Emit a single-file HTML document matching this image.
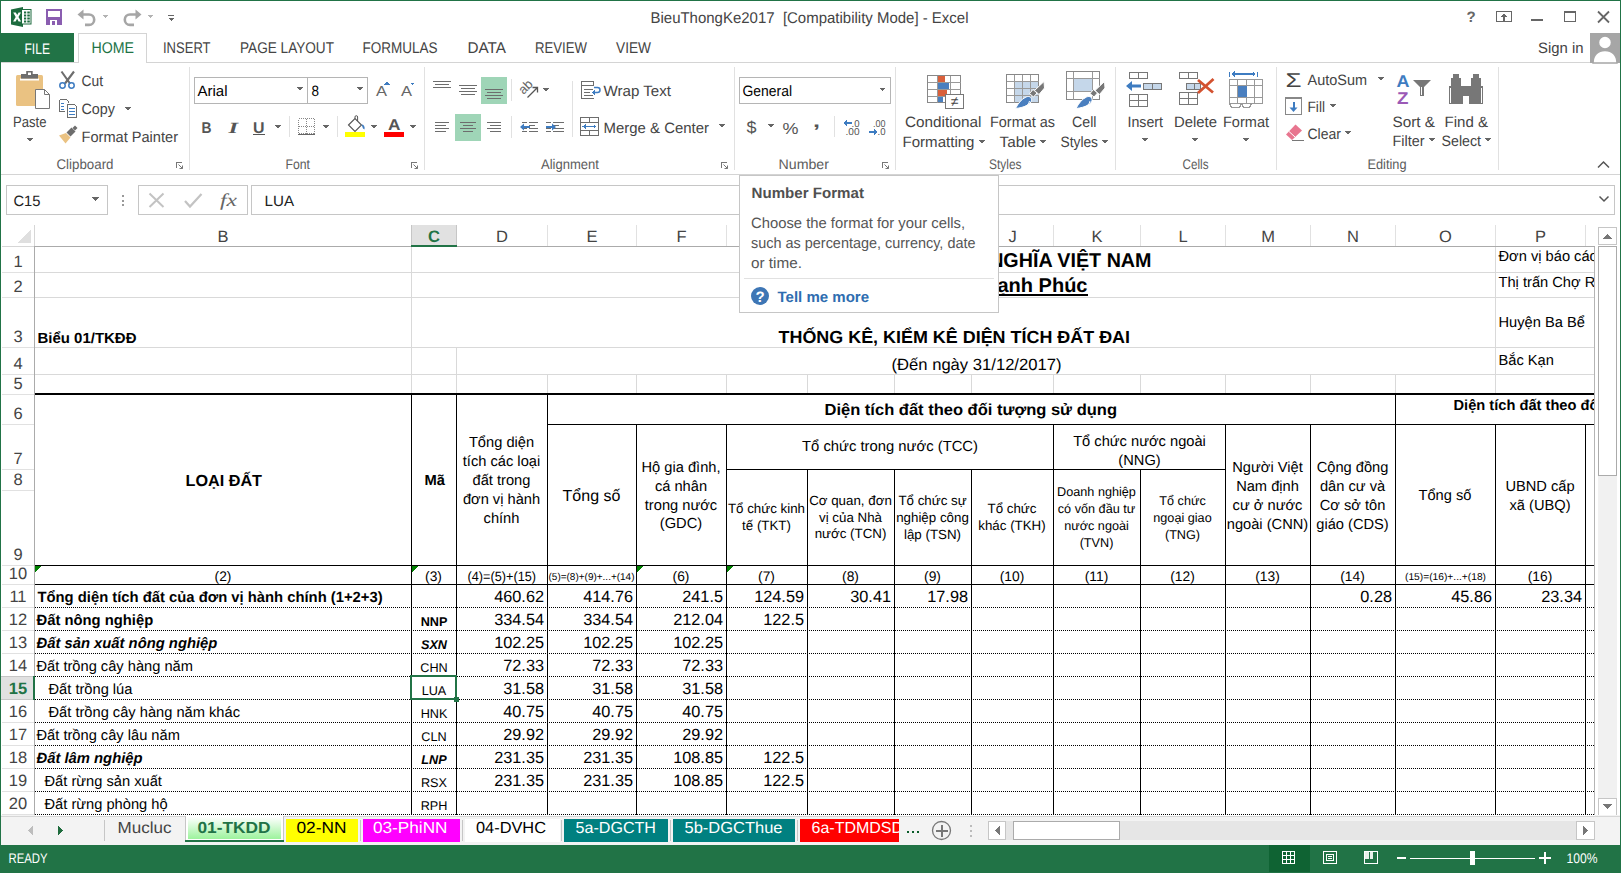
<!DOCTYPE html><html><head><meta charset="utf-8"><style>html,body{margin:0;padding:0;background:#fff;overflow:hidden}svg{display:block}</style></head><body>
<svg width="1621" height="873" viewBox="0 0 1621 873" shape-rendering="crispEdges" text-rendering="geometricPrecision">
<rect x="0" y="0" width="1621" height="873" fill="#fff" />
<g shape-rendering="geometricPrecision">
<path d="M11 9.5L23 7V27L11 24.5Z" fill="#1d6b3e"/>
<rect x="21.5" y="9.5" width="9.5" height="14.5" fill="#fff" stroke="#1d6b3e" stroke-width="1"/>
<rect x="24" y="11.5" width="2.2" height="2" fill="#1d6b3e"/><rect x="27.3" y="11.5" width="2.5" height="2" fill="#1d6b3e"/>
<rect x="24" y="14.5" width="2.2" height="2" fill="#1d6b3e"/><rect x="27.3" y="14.5" width="2.5" height="2" fill="#1d6b3e"/>
<rect x="24" y="17.5" width="2.2" height="2" fill="#1d6b3e"/><rect x="27.3" y="17.5" width="2.5" height="2" fill="#1d6b3e"/>
<rect x="24" y="20.5" width="2.2" height="2" fill="#1d6b3e"/><rect x="27.3" y="20.5" width="2.5" height="2" fill="#1d6b3e"/>
<path d="M13.2 12.5h2.6l1.4 2.6 1.4-2.6h2.4l-2.5 4.4 2.6 4.6h-2.5l-1.5-2.8-1.5 2.8h-2.5l2.6-4.6z" fill="#fff"/>
</g>
<rect x="46" y="9" width="16" height="16" fill="#8a5db0" />
<rect x="48" y="11" width="12" height="6" fill="#fff" />
<rect x="50" y="20" width="7" height="5" fill="#fff" />
<rect x="52" y="21" width="3" height="4" fill="#8a5db0" />
<g fill="none" stroke="#a6a6a6" stroke-width="2.6" shape-rendering="geometricPrecision">
<path d="M81 14.5h8a5.2 5.2 0 0 1 0 10.4h-4"/>
<path d="M138 14.5h-8a5.2 5.2 0 0 0 0 10.4h4"/>
</g>
<path d="M77.5 14.5l6-5v10z" fill="#a6a6a6" shape-rendering="geometricPrecision"/>
<path d="M141.5 14.5l-6-5v10z" fill="#a6a6a6" shape-rendering="geometricPrecision"/>
<path d="M102.0 15.0h6l-3.0 3.0z" fill="#b3b3b3"/>
<path d="M147.0 15.0h6l-3.0 3.0z" fill="#b3b3b3"/>
<rect x="168" y="15" width="6" height="1" fill="#666" />
<path d="M168 18h6l-3 3z" fill="#666"/>
<text x="650.5" y="22.8" font-family="Liberation Sans" font-size="15.5" font-weight="normal" font-style="normal" fill="#444" textLength="318.0" lengthAdjust="spacingAndGlyphs" >BieuThongKe2017  [Compatibility Mode] - Excel</text>
<text x="1471" y="22" font-family="Liberation Sans" font-size="15" font-weight="bold" fill="#666" text-anchor="middle">?</text>
<rect x="1496.5" y="11.5" width="15" height="10" fill="none" stroke="#666" stroke-width="1" />
<path d="M1504 13.5l-3 3h2v4h2v-4h2z" fill="#666"/>
<rect x="1531" y="19" width="12" height="2" fill="#666" />
<rect x="1564.5" y="11.5" width="11" height="10" fill="none" stroke="#666" stroke-width="1" />
<rect x="1564" y="11" width="12" height="2" fill="#666" />
<path d="M1598 11.5l11 11M1609 11.5l-11 11" stroke="#666" stroke-width="1.8" shape-rendering="geometricPrecision"/>
<rect x="1" y="33" width="73" height="30" fill="#217346" />
<text x="24.5" y="53.6" font-family="Liberation Sans" font-size="15.3" font-weight="normal" font-style="normal" fill="#fff" textLength="25.5" lengthAdjust="spacingAndGlyphs" >FILE</text>
<path d="M78.5 62.5V33.5H146.5V62.5" fill="#fff" stroke="#d4d4d4"/>
<text x="91.5" y="53.2" font-family="Liberation Sans" font-size="15.5" font-weight="normal" font-style="normal" fill="#217346" textLength="42.5" lengthAdjust="spacingAndGlyphs" >HOME</text>
<text x="163.0" y="53.2" font-family="Liberation Sans" font-size="15.5" font-weight="normal" font-style="normal" fill="#444" textLength="47.5" lengthAdjust="spacingAndGlyphs" >INSERT</text>
<text x="240.0" y="53.2" font-family="Liberation Sans" font-size="15.5" font-weight="normal" font-style="normal" fill="#444" textLength="94.0" lengthAdjust="spacingAndGlyphs" >PAGE LAYOUT</text>
<text x="362.5" y="53.2" font-family="Liberation Sans" font-size="15.5" font-weight="normal" font-style="normal" fill="#444" textLength="75.0" lengthAdjust="spacingAndGlyphs" >FORMULAS</text>
<text x="467.5" y="53.2" font-family="Liberation Sans" font-size="15.5" font-weight="normal" font-style="normal" fill="#444" textLength="38.5" lengthAdjust="spacingAndGlyphs" >DATA</text>
<text x="535.0" y="53.2" font-family="Liberation Sans" font-size="15.5" font-weight="normal" font-style="normal" fill="#444" textLength="52.0" lengthAdjust="spacingAndGlyphs" >REVIEW</text>
<text x="616.0" y="53.2" font-family="Liberation Sans" font-size="15.5" font-weight="normal" font-style="normal" fill="#444" textLength="35.0" lengthAdjust="spacingAndGlyphs" >VIEW</text>
<text x="1538.0" y="52.5" font-family="Liberation Sans" font-size="15" font-weight="normal" font-style="normal" fill="#444" textLength="45.5" lengthAdjust="spacingAndGlyphs" >Sign in</text>
<rect x="1590" y="33" width="30" height="30" fill="#a6a6a6" />
<path d="M1593 63c0-8 5-12.5 12-12.5s12 4.5 12 12.5z" fill="#fff" stroke="#a6a6a6" stroke-width="1.5" shape-rendering="geometricPrecision"/>
<circle cx="1605" cy="42.5" r="6.5" fill="#fff" stroke="#a6a6a6" stroke-width="1.5" shape-rendering="geometricPrecision"/>
<line x1="1" y1="62.5" x2="79" y2="62.5" stroke="#d4d4d4" stroke-width="1"/>
<line x1="146" y1="62.5" x2="1590" y2="62.5" stroke="#d4d4d4" stroke-width="1"/>
<line x1="1" y1="174.5" x2="1620" y2="174.5" stroke="#d4d4d4" stroke-width="1"/>
<line x1="189.5" y1="67" x2="189.5" y2="170" stroke="#e1e1e1" stroke-width="1"/>
<line x1="424.5" y1="67" x2="424.5" y2="170" stroke="#e1e1e1" stroke-width="1"/>
<line x1="734.5" y1="67" x2="734.5" y2="170" stroke="#e1e1e1" stroke-width="1"/>
<line x1="895.5" y1="67" x2="895.5" y2="170" stroke="#e1e1e1" stroke-width="1"/>
<line x1="1115.5" y1="67" x2="1115.5" y2="170" stroke="#e1e1e1" stroke-width="1"/>
<line x1="1276.5" y1="67" x2="1276.5" y2="170" stroke="#e1e1e1" stroke-width="1"/>
<line x1="1498.5" y1="67" x2="1498.5" y2="170" stroke="#e1e1e1" stroke-width="1"/>
<text x="56.5" y="169.0" font-family="Liberation Sans" font-size="14" font-weight="normal" font-style="normal" fill="#5c5c5c" textLength="57.0" lengthAdjust="spacingAndGlyphs" >Clipboard</text>
<text x="285.5" y="169.0" font-family="Liberation Sans" font-size="14" font-weight="normal" font-style="normal" fill="#5c5c5c" textLength="24.5" lengthAdjust="spacingAndGlyphs" >Font</text>
<text x="541.0" y="169.0" font-family="Liberation Sans" font-size="14" font-weight="normal" font-style="normal" fill="#5c5c5c" textLength="58.0" lengthAdjust="spacingAndGlyphs" >Alignment</text>
<text x="778.5" y="169.0" font-family="Liberation Sans" font-size="14" font-weight="normal" font-style="normal" fill="#5c5c5c" textLength="50.5" lengthAdjust="spacingAndGlyphs" >Number</text>
<text x="989.0" y="169.0" font-family="Liberation Sans" font-size="14" font-weight="normal" font-style="normal" fill="#5c5c5c" textLength="32.5" lengthAdjust="spacingAndGlyphs" >Styles</text>
<text x="1182.5" y="169.0" font-family="Liberation Sans" font-size="14" font-weight="normal" font-style="normal" fill="#5c5c5c" textLength="26.0" lengthAdjust="spacingAndGlyphs" >Cells</text>
<text x="1367.5" y="169.0" font-family="Liberation Sans" font-size="14" font-weight="normal" font-style="normal" fill="#5c5c5c" textLength="39.0" lengthAdjust="spacingAndGlyphs" >Editing</text>
<path d="M176.5 168V162.5H182" fill="none" stroke="#777" shape-rendering="crispEdges"/>
<path d="M178.5 164.5L182.5 168.5M182.5 165.5V168.5H179.5" fill="none" stroke="#777" stroke-width="1" shape-rendering="geometricPrecision"/>
<path d="M411.5 168V162.5H417" fill="none" stroke="#777" shape-rendering="crispEdges"/>
<path d="M413.5 164.5L417.5 168.5M417.5 165.5V168.5H414.5" fill="none" stroke="#777" stroke-width="1" shape-rendering="geometricPrecision"/>
<path d="M721.5 168V162.5H727" fill="none" stroke="#777" shape-rendering="crispEdges"/>
<path d="M723.5 164.5L727.5 168.5M727.5 165.5V168.5H724.5" fill="none" stroke="#777" stroke-width="1" shape-rendering="geometricPrecision"/>
<path d="M882.5 168V162.5H888" fill="none" stroke="#777" shape-rendering="crispEdges"/>
<path d="M884.5 164.5L888.5 168.5M888.5 165.5V168.5H885.5" fill="none" stroke="#777" stroke-width="1" shape-rendering="geometricPrecision"/>
<path d="M1598 167.5l5.5-5.5 5.5 5.5" fill="none" stroke="#555" stroke-width="1.5" shape-rendering="geometricPrecision"/>
<g shape-rendering="geometricPrecision">
<rect x="16" y="75" width="27" height="31" rx="1.5" fill="#eac282"/>
<rect x="20" y="78.5" width="19" height="2" fill="#fff"/>
<rect x="21" y="74" width="17" height="4.6" fill="#6d6d6d"/>
<rect x="26.2" y="71" width="6.5" height="4" fill="#6d6d6d"/>
<rect x="28" y="72.5" width="3" height="2.5" fill="#fff"/>
<path d="M35.5 89.5h9l5 5v14h-14z" fill="#fff" stroke="#777"/>
<path d="M44.5 89.5v5h5" fill="none" stroke="#777"/>
</g>
<text x="13.0" y="126.5" font-family="Liberation Sans" font-size="15" font-weight="normal" font-style="normal" fill="#444" textLength="33.5" lengthAdjust="spacingAndGlyphs" >Paste</text>
<path d="M26.5 138.25h7l-3.5 3.5z" fill="#666"/>
<g shape-rendering="geometricPrecision" fill="none">
<path d="M61.5 71.5L70 83.5M74 71.5L65 83.5" stroke="#6d6d6d" stroke-width="2.1"/>
<circle cx="62.5" cy="85.5" r="2.7" stroke="#3e7cc1" stroke-width="1.5"/><circle cx="71.5" cy="85.5" r="2.7" stroke="#3e7cc1" stroke-width="1.5"/>
</g>
<text x="81.5" y="85.5" font-family="Liberation Sans" font-size="15" font-weight="normal" font-style="normal" fill="#444" textLength="21.5" lengthAdjust="spacingAndGlyphs" >Cut</text>
<path d="M59.5 99.5h7l2 2v1M59.5 99.5v12h5" fill="none" stroke="#6d6d6d"/>
<path d="M67.5 104.5h7l2 2v10.5h-9z" fill="#fff" stroke="#6d6d6d"/>
<rect x="61" y="103" width="3" height="1" fill="#3e7cc1" />
<rect x="61" y="106" width="3" height="1" fill="#3e7cc1" />
<rect x="61" y="109" width="3" height="1" fill="#3e7cc1" />
<rect x="69" y="108" width="6" height="1" fill="#3e7cc1" />
<rect x="69" y="111" width="6" height="1" fill="#3e7cc1" />
<rect x="69" y="114" width="6" height="1" fill="#3e7cc1" />
<text x="81.5" y="114.0" font-family="Liberation Sans" font-size="15" font-weight="normal" font-style="normal" fill="#444" textLength="33.5" lengthAdjust="spacingAndGlyphs" >Copy</text>
<path d="M124.5 106.75h7l-3.5 3.5z" fill="#666"/>
<g shape-rendering="geometricPrecision">
<path d="M59 135.5l7-2.5 4.5 4.5-5 6z" fill="#eac282"/>
<path d="M66.5 132.5l5-5 4 4-5 5z" fill="#6d6d6d"/>
<path d="M72.5 128l2.5-2.5 2.5 2.5-2.5 2.5z" fill="#6d6d6d"/>
</g>
<text x="81.5" y="142.0" font-family="Liberation Sans" font-size="15" font-weight="normal" font-style="normal" fill="#444" textLength="96.5" lengthAdjust="spacingAndGlyphs" >Format Painter</text>
<rect x="194.5" y="77.5" width="113" height="26" fill="#fff" stroke="#b5b5b5" stroke-width="1" />
<rect x="307.5" y="77.5" width="60" height="26" fill="#fff" stroke="#b5b5b5" stroke-width="1" />
<text x="197.5" y="96.0" font-family="Liberation Sans" font-size="15" font-weight="normal" font-style="normal" fill="#000" textLength="30.0" lengthAdjust="spacingAndGlyphs" >Arial</text>
<text x="311.5" y="96.0" font-family="Liberation Sans" font-size="15" font-weight="normal" font-style="normal" fill="#000" textLength="7.5" lengthAdjust="spacingAndGlyphs" >8</text>
<path d="M296.5 87.25h7l-3.5 3.5z" fill="#666"/>
<path d="M356.5 87.25h7l-3.5 3.5z" fill="#666"/>
<text x="376.0" y="96.0" font-family="Liberation Sans" font-size="14.5" font-weight="normal" font-style="normal" fill="#666" textLength="11.0" lengthAdjust="spacingAndGlyphs" >A</text>
<text x="401.0" y="96.0" font-family="Liberation Sans" font-size="14.5" font-weight="normal" font-style="normal" fill="#666" textLength="11.0" lengthAdjust="spacingAndGlyphs" >A</text>
<path d="M384 84.5l3-2.5 3 2.5z" fill="#3e7cc1"/><path d="M409.5 82.5h5.5l-2.75 2.5z" fill="#3e7cc1"/>
<text x="201.5" y="133.0" font-family="Liberation Sans" font-size="15.5" font-weight="bold" font-style="normal" fill="#555" textLength="10.0" lengthAdjust="spacingAndGlyphs" >B</text>
<text x="228.5" y="133.0" font-family="Liberation Serif" font-size="15.5" font-weight="bold" font-style="italic" fill="#555" textLength="9.5" lengthAdjust="spacingAndGlyphs" >I</text>
<text x="253.0" y="132.5" font-family="Liberation Sans" font-size="15.5" font-weight="bold" font-style="normal" fill="#555" textLength="11.5" lengthAdjust="spacingAndGlyphs" >U</text>
<rect x="253" y="134" width="12" height="1" fill="#555" />
<path d="M274.5 124.75h7l-3.5 3.5z" fill="#666"/>
<line x1="289.5" y1="116" x2="289.5" y2="137" stroke="#e1e1e1" stroke-width="1"/>
<rect x="298.5" y="118.5" width="16" height="15" fill="none" stroke="#888" stroke-dasharray="1 1"/>
<path d="M306.5 118.5v15M298.5 126.5h16" fill="none" stroke="#888" stroke-dasharray="1 1"/>
<rect x="298" y="134" width="17" height="1" fill="#666" />
<path d="M322.5 124.75h7l-3.5 3.5z" fill="#666"/>
<line x1="337.5" y1="116" x2="337.5" y2="137" stroke="#e1e1e1" stroke-width="1"/>
<g shape-rendering="geometricPrecision"><path d="M348.5 125l6.5-6.5 6.5 6.5-6.5 6.5z" fill="#fff" stroke="#555" stroke-width="1.1"/><path d="M355 118.5v-1.5a1.3 1.3 0 0 1 2.6 0v4" fill="none" stroke="#555" stroke-width="1"/><path d="M361.5 124.5c2.5 0 3.5 2 3 5l-1.5-1z" fill="#3e7cc1"/></g>
<rect x="345" y="132" width="20" height="5" fill="#ffff00" />
<path d="M370.5 124.75h7l-3.5 3.5z" fill="#666"/>
<text x="388.0" y="130.0" font-family="Liberation Sans" font-size="15.5" font-weight="bold" font-style="normal" fill="#555" textLength="12.5" lengthAdjust="spacingAndGlyphs" >A</text>
<rect x="384" y="132" width="20" height="5" fill="#ff0000" />
<path d="M409.5 124.75h7l-3.5 3.5z" fill="#666"/>
<rect x="433" y="81" width="18" height="1" fill="#6d6d6d" />
<rect x="435" y="84" width="14" height="1" fill="#6d6d6d" />
<rect x="433" y="87" width="18" height="1" fill="#6d6d6d" />
<rect x="459" y="85" width="18" height="1" fill="#6d6d6d" />
<rect x="461" y="88" width="14" height="1" fill="#6d6d6d" />
<rect x="459" y="91" width="18" height="1" fill="#6d6d6d" />
<rect x="461" y="94" width="14" height="1" fill="#6d6d6d" />
<rect x="481" y="77" width="26" height="27" fill="#9fd5b7" />
<rect x="485" y="89" width="18" height="1" fill="#6d6d6d" />
<rect x="487" y="92" width="14" height="1" fill="#6d6d6d" />
<rect x="485" y="95" width="18" height="1" fill="#6d6d6d" />
<rect x="487" y="98" width="14" height="1" fill="#6d6d6d" />
<line x1="511.5" y1="79" x2="511.5" y2="101" stroke="#e1e1e1" stroke-width="1"/>
<g shape-rendering="geometricPrecision"><text x="0" y="0" font-family="Liberation Sans" font-size="13" fill="#666" transform="translate(523.5 95) rotate(-45)">ab</text><path d="M527.5 97.5l10-10M532.5 87.5h5v5" fill="none" stroke="#555" stroke-width="1.3"/></g>
<path d="M542.5 87.75h7l-3.5 3.5z" fill="#666"/>
<rect x="435" y="122" width="14" height="1" fill="#6d6d6d" />
<rect x="435" y="125" width="11" height="1" fill="#6d6d6d" />
<rect x="435" y="128" width="14" height="1" fill="#6d6d6d" />
<rect x="435" y="131" width="11" height="1" fill="#6d6d6d" />
<rect x="455" y="114" width="26" height="27" fill="#9fd5b7" />
<rect x="460" y="122" width="16" height="1" fill="#6d6d6d" />
<rect x="463" y="125" width="10" height="1" fill="#6d6d6d" />
<rect x="460" y="128" width="16" height="1" fill="#6d6d6d" />
<rect x="463" y="131" width="10" height="1" fill="#6d6d6d" />
<rect x="487" y="122" width="14" height="1" fill="#6d6d6d" />
<rect x="490" y="125" width="11" height="1" fill="#6d6d6d" />
<rect x="487" y="128" width="14" height="1" fill="#6d6d6d" />
<rect x="490" y="131" width="11" height="1" fill="#6d6d6d" />
<line x1="511.5" y1="116" x2="511.5" y2="138" stroke="#e1e1e1" stroke-width="1"/>
<rect x="522" y="122" width="5" height="1" fill="#6d6d6d" />
<rect x="522" y="125" width="0" height="1" fill="#6d6d6d" />
<rect x="522" y="128" width="5" height="1" fill="#6d6d6d" />
<rect x="522" y="131" width="5" height="1" fill="#6d6d6d" />
<rect x="529" y="122" width="9" height="1" fill="#6d6d6d" />
<rect x="529" y="125" width="6" height="1" fill="#6d6d6d" />
<rect x="529" y="128" width="9" height="1" fill="#6d6d6d" />
<rect x="529" y="131" width="9" height="1" fill="#6d6d6d" />
<path d="M520 127l4-3.5v2.5h6v2h-6v2.5z" fill="#3e7cc1" shape-rendering="geometricPrecision"/>
<rect x="546" y="122" width="5" height="1" fill="#6d6d6d" />
<rect x="546" y="128" width="5" height="1" fill="#6d6d6d" />
<rect x="546" y="131" width="5" height="1" fill="#6d6d6d" />
<rect x="553" y="122" width="11" height="1" fill="#6d6d6d" />
<rect x="553" y="125" width="6" height="1" fill="#6d6d6d" />
<rect x="553" y="128" width="11" height="1" fill="#6d6d6d" />
<rect x="553" y="131" width="11" height="1" fill="#6d6d6d" />
<path d="M556 127l-4-3.5v2.5h-6v2h6v2.5z" fill="#3e7cc1" shape-rendering="geometricPrecision"/>
<line x1="572.5" y1="81" x2="572.5" y2="137" stroke="#e1e1e1" stroke-width="1"/>
<path d="M581.5 81.5h12v4h-12zM581.5 85.5v13h12" fill="none" stroke="#6d6d6d"/>
<rect x="584" y="89" width="9" height="1" fill="#6d6d6d" />
<rect x="584" y="92" width="6" height="1" fill="#6d6d6d" />
<rect x="584" y="95" width="9" height="1" fill="#6d6d6d" />
<path d="M594 87.5h3.5a2.5 2.5 0 0 1 0 5h-4" fill="none" stroke="#3e7cc1" stroke-width="1.5" shape-rendering="geometricPrecision"/><path d="M592 92.5l3-2.5v5z" fill="#3e7cc1"/>
<text x="603.5" y="96.0" font-family="Liberation Sans" font-size="15" font-weight="normal" font-style="normal" fill="#444" textLength="67.5" lengthAdjust="spacingAndGlyphs" >Wrap Text</text>
<rect x="580.5" y="117.5" width="18" height="18" fill="#fff" stroke="#6d6d6d"/><path d="M580.5 122.5h18M580.5 130.5h18M589.5 117.5v5M589.5 130.5v5" fill="none" stroke="#6d6d6d"/>
<path d="M583 126.5h13" stroke="#3e7cc1" stroke-width="1.2"/><path d="M582.5 126.5l3-2.5v5zM596.5 126.5l-3-2.5v5z" fill="#3e7cc1"/>
<text x="603.5" y="133.0" font-family="Liberation Sans" font-size="15" font-weight="normal" font-style="normal" fill="#444" textLength="105.5" lengthAdjust="spacingAndGlyphs" >Merge &amp; Center</text>
<path d="M718.5 124.25h7l-3.5 3.5z" fill="#666"/>
<rect x="739.5" y="77.5" width="151" height="26" fill="#fff" stroke="#b5b5b5" stroke-width="1" />
<text x="742.5" y="96.0" font-family="Liberation Sans" font-size="15" font-weight="normal" font-style="normal" fill="#000" textLength="49.5" lengthAdjust="spacingAndGlyphs" >General</text>
<path d="M879.0 87.75h7l-3.5 3.5z" fill="#666"/>
<text x="746.5" y="133.0" font-family="Liberation Sans" font-size="17" font-weight="normal" font-style="normal" fill="#555" textLength="10.0" lengthAdjust="spacingAndGlyphs" >$</text>
<path d="M767.5 124.25h7l-3.5 3.5z" fill="#666"/>
<text x="782.5" y="133.5" font-family="Liberation Sans" font-size="16" font-weight="normal" font-style="normal" fill="#555" textLength="16.0" lengthAdjust="spacingAndGlyphs" >%</text>
<text x="813.0" y="127.0" font-family="Liberation Sans" font-size="17" font-weight="bold" font-style="normal" fill="#555" textLength="7.0" lengthAdjust="spacingAndGlyphs" >,</text>
<line x1="834.5" y1="116" x2="834.5" y2="137" stroke="#e1e1e1" stroke-width="1"/>
<text x="851.5" y="126.5" font-family="Liberation Sans" font-size="10" font-weight="normal" font-style="normal" fill="#555" textLength="8.0" lengthAdjust="spacingAndGlyphs" >.0</text>
<text x="845.5" y="135.0" font-family="Liberation Sans" font-size="10" font-weight="normal" font-style="normal" fill="#555" textLength="14.0" lengthAdjust="spacingAndGlyphs" >.00</text>
<path d="M843.5 123l3.5-3v2h5v2h-5v2z" fill="#3e7cc1"/>
<text x="873.0" y="126.5" font-family="Liberation Sans" font-size="10" font-weight="normal" font-style="normal" fill="#555" textLength="12.5" lengthAdjust="spacingAndGlyphs" >.00</text>
<text x="877.5" y="135.0" font-family="Liberation Sans" font-size="10" font-weight="normal" font-style="normal" fill="#555" textLength="8.0" lengthAdjust="spacingAndGlyphs" >.0</text>
<path d="M877.5 132l-3.5-3v2h-5v2h5v2z" fill="#3e7cc1"/>
<g shape-rendering="crispEdges">
<rect x="927.5" y="75.5" width="33" height="27" fill="#fff" stroke="#888"/>
<path d="M937.5 75.5v27M950.5 75.5v27M927.5 82.5h33M927.5 89.5h33M927.5 96.5h33" stroke="#999" fill="none"/>
<rect x="938" y="76" width="7" height="6" fill="#d9603b"/><rect x="938" y="83" width="11" height="6" fill="#4a7fbf"/><rect x="938" y="90" width="9" height="6" fill="#d9603b"/><rect x="938" y="97" width="5" height="5" fill="#4a7fbf"/>
<rect x="945.5" y="94.5" width="18" height="14" fill="#fff" stroke="#777"/>
</g>
<text x="954.5" y="106" font-family="Liberation Sans" font-size="14" fill="#444" text-anchor="middle">≠</text>
<rect x="1006.5" y="74.5" width="32" height="28" fill="#fff" stroke="#888"/>
<rect x="1014" y="82" width="24" height="20" fill="#c5d7ea" />
<path d="M1014.5 74.5v28M1022.5 74.5v28M1030.5 74.5v28M1006.5 81.5h32M1006.5 88.5h32M1006.5 95.5h32" stroke="#999" fill="none"/>
<g shape-rendering="geometricPrecision"><path d="M1044 81.5l0.5 6.5-5.5 6.5-4.5-4z" fill="#777" stroke="#fff" stroke-width="1"/><path d="M1037 93l-3.5 4-4-3.5 3.5-4z" fill="#777" stroke="#fff" stroke-width="1"/><path d="M1015.5 108.5c2.5-5 6-9.5 10.5-11.5 3.5-1.5 6 0.5 5.5 3.5-0.5 3.5-6.5 7-16 8z" fill="#4a7fbf" stroke="#fff" stroke-width="1"/><path d="M1024 107c3-1 5-3 5.5-6" fill="none" stroke="#fff" stroke-width="1"/></g>
<rect x="1066.5" y="71.5" width="33" height="28" fill="#fff" stroke="#888"/>
<rect x="1074" y="79" width="18" height="12" fill="#c5d7ea" />
<path d="M1073.5 71.5v28M1092.5 71.5v28M1066.5 78.5h33M1066.5 91.5h33" stroke="#999" fill="none"/>
<g shape-rendering="geometricPrecision"><path d="M1104.5 81.5l0.5 6.5-5.5 6.5-4.5-4z" fill="#777" stroke="#fff" stroke-width="1"/><path d="M1097.5 93l-3.5 4-4-3.5 3.5-4z" fill="#777" stroke="#fff" stroke-width="1"/><path d="M1076 108.5c2.5-5 6-9.5 10.5-11.5 3.5-1.5 6 0.5 5.5 3.5-0.5 3.5-6.5 7-16 8z" fill="#4a7fbf" stroke="#fff" stroke-width="1"/><path d="M1084.5 107c3-1 5-3 5.5-6" fill="none" stroke="#fff" stroke-width="1"/></g>
<text x="905.0" y="126.5" font-family="Liberation Sans" font-size="15" font-weight="normal" font-style="normal" fill="#444" textLength="76.5" lengthAdjust="spacingAndGlyphs" >Conditional</text>
<text x="902.5" y="146.5" font-family="Liberation Sans" font-size="15" font-weight="normal" font-style="normal" fill="#444" textLength="72.0" lengthAdjust="spacingAndGlyphs" >Formatting</text>
<path d="M978.5 140.25h7l-3.5 3.5z" fill="#666"/>
<text x="990.0" y="126.5" font-family="Liberation Sans" font-size="15" font-weight="normal" font-style="normal" fill="#444" textLength="65.0" lengthAdjust="spacingAndGlyphs" >Format as</text>
<text x="999.5" y="146.5" font-family="Liberation Sans" font-size="15" font-weight="normal" font-style="normal" fill="#444" textLength="36.5" lengthAdjust="spacingAndGlyphs" >Table</text>
<path d="M1039.5 140.25h7l-3.5 3.5z" fill="#666"/>
<text x="1072.0" y="126.5" font-family="Liberation Sans" font-size="15" font-weight="normal" font-style="normal" fill="#444" textLength="24.5" lengthAdjust="spacingAndGlyphs" >Cell</text>
<text x="1060.5" y="146.5" font-family="Liberation Sans" font-size="15" font-weight="normal" font-style="normal" fill="#444" textLength="37.5" lengthAdjust="spacingAndGlyphs" >Styles</text>
<path d="M1101.5 140.25h7l-3.5 3.5z" fill="#666"/>
<g fill="none" stroke="#777">
<rect x="1129.5" y="72.5" width="18" height="6"/><path d="M1138.5 72.5v6"/>
<rect x="1129.5" y="94.5" width="18" height="12"/><path d="M1138.5 94.5v12M1129.5 100.5h18"/>
<rect x="1143.5" y="83.5" width="18" height="6" fill="#c5d7ea"/><path d="M1152.5 83.5v6"/>
<rect x="1179.5" y="72.5" width="18" height="6"/><path d="M1188.5 72.5v6"/>
<rect x="1179.5" y="92.5" width="18" height="12"/><path d="M1188.5 92.5v12M1179.5 98.5h18"/>
<rect x="1186.5" y="83.5" width="14" height="6" fill="#c5d7ea"/><path d="M1194.5 83.5v6"/>
</g>
<path d="M1126 86l6-5v3.5h9v3h-9v3.5z" fill="#3e7cc1" shape-rendering="geometricPrecision"/>
<path d="M1198 80l15 12.5M1213.5 79l-15.5 14" stroke="#d35230" stroke-width="2.8" shape-rendering="geometricPrecision"/>
<g fill="none" stroke="#999"><rect x="1229.5" y="79.5" width="33" height="24"/><path d="M1237.5 79.5v24M1246.5 79.5v24M1254.5 79.5v24M1229.5 85.5h33M1229.5 97.5h33"/></g>
<rect x="1238" y="86" width="9" height="11" fill="#4a7fbf" />
<path d="M1229.5 103.5l2 4h8l2-4M1241.5 103.5l2 4h6l2-4" fill="none" stroke="#999"/>
<path d="M1229.5 71.5v5M1257.5 71.5v5" stroke="#3e7cc1"/><path d="M1232 74h23" stroke="#3e7cc1" stroke-width="1.5"/><path d="M1231 74l3.5-3v6zM1256 74l-3.5-3v6z" fill="#3e7cc1"/>
<text x="1127.5" y="127.0" font-family="Liberation Sans" font-size="15" font-weight="normal" font-style="normal" fill="#444" textLength="35.5" lengthAdjust="spacingAndGlyphs" >Insert</text>
<path d="M1141.5 138.25h7l-3.5 3.5z" fill="#666"/>
<text x="1174.0" y="127.0" font-family="Liberation Sans" font-size="15" font-weight="normal" font-style="normal" fill="#444" textLength="43.0" lengthAdjust="spacingAndGlyphs" >Delete</text>
<path d="M1191.5 138.25h7l-3.5 3.5z" fill="#666"/>
<text x="1223.0" y="127.0" font-family="Liberation Sans" font-size="15" font-weight="normal" font-style="normal" fill="#444" textLength="46.0" lengthAdjust="spacingAndGlyphs" >Format</text>
<path d="M1242.5 138.25h7l-3.5 3.5z" fill="#666"/>
<text x="1285.5" y="86.5" font-family="Liberation Sans" font-size="20" font-weight="normal" font-style="normal" fill="#444" textLength="16.0" lengthAdjust="spacingAndGlyphs" >Σ</text>
<text x="1307.5" y="85.0" font-family="Liberation Sans" font-size="15" font-weight="normal" font-style="normal" fill="#444" textLength="59.5" lengthAdjust="spacingAndGlyphs" >AutoSum</text>
<path d="M1377.5 76.75h7l-3.5 3.5z" fill="#666"/>
<rect x="1285.5" y="97.5" width="16" height="17" fill="#fff" stroke="#888"/>
<rect x="1286" y="97" width="16" height="2" fill="#888" />
<path d="M1293.5 102v8" stroke="#3e7cc1" stroke-width="2"/><path d="M1289.5 107.5l4 4.5 4-4.5z" fill="#3e7cc1" shape-rendering="geometricPrecision"/>
<text x="1307.5" y="111.5" font-family="Liberation Sans" font-size="15" font-weight="normal" font-style="normal" fill="#444" textLength="17.5" lengthAdjust="spacingAndGlyphs" >Fill</text>
<path d="M1329.5 103.75h7l-3.5 3.5z" fill="#666"/>
<path d="M1286 134.5l9.5-10 6.5 6-10 9.5z" fill="#e8758f" shape-rendering="geometricPrecision"/><path d="M1289 131.5l6 5.5" stroke="#fff" stroke-width="1" shape-rendering="geometricPrecision"/>
<rect x="1292" y="140" width="12" height="1" fill="#777" />
<text x="1307.5" y="138.5" font-family="Liberation Sans" font-size="15" font-weight="normal" font-style="normal" fill="#444" textLength="33.5" lengthAdjust="spacingAndGlyphs" >Clear</text>
<path d="M1344.5 130.75h7l-3.5 3.5z" fill="#666"/>
<text x="1396.5" y="86.5" font-family="Liberation Sans" font-size="17" font-weight="bold" font-style="normal" fill="#3e7cc1" textLength="13.0" lengthAdjust="spacingAndGlyphs" >A</text>
<text x="1397.0" y="103.7" font-family="Liberation Sans" font-size="17" font-weight="bold" font-style="normal" fill="#9b59b6" textLength="11.5" lengthAdjust="spacingAndGlyphs" >Z</text>
<path d="M1413 80h18l-7 7v9h-4v-9z" fill="#777" shape-rendering="geometricPrecision"/><path d="M1421.5 87v8" stroke="#fff" stroke-width="1"/>
<g shape-rendering="crispEdges"><rect x="1449" y="86" width="14" height="18" fill="#777"/><rect x="1469" y="86" width="14" height="18" fill="#777"/><rect x="1451" y="78" width="10" height="9" fill="#777"/><rect x="1471" y="78" width="10" height="9" fill="#777"/><rect x="1453" y="74" width="6" height="5" fill="#777"/><rect x="1473" y="74" width="6" height="5" fill="#777"/><rect x="1462" y="86" width="8" height="10" fill="#777"/></g>
<path d="M1450.5 88v15M1481.5 88v15" stroke="#fff" stroke-width="1"/>
<text x="1392.5" y="126.5" font-family="Liberation Sans" font-size="15" font-weight="normal" font-style="normal" fill="#444" textLength="42.5" lengthAdjust="spacingAndGlyphs" >Sort &amp;</text>
<text x="1392.5" y="146.0" font-family="Liberation Sans" font-size="15" font-weight="normal" font-style="normal" fill="#444" textLength="32.0" lengthAdjust="spacingAndGlyphs" >Filter</text>
<path d="M1428.5 138.25h7l-3.5 3.5z" fill="#666"/>
<text x="1444.5" y="126.5" font-family="Liberation Sans" font-size="15" font-weight="normal" font-style="normal" fill="#444" textLength="43.5" lengthAdjust="spacingAndGlyphs" >Find &amp;</text>
<text x="1441.5" y="146.0" font-family="Liberation Sans" font-size="15" font-weight="normal" font-style="normal" fill="#444" textLength="39.5" lengthAdjust="spacingAndGlyphs" >Select</text>
<path d="M1484.5 138.25h7l-3.5 3.5z" fill="#666"/>
<rect x="6.5" y="185.5" width="101" height="29" fill="#fff" stroke="#c6c6c6" stroke-width="1" />
<text x="13.5" y="206.0" font-family="Liberation Sans" font-size="15" font-weight="normal" font-style="normal" fill="#222" textLength="27.0" lengthAdjust="spacingAndGlyphs" >C15</text>
<path d="M92.0 197.25h7l-3.5 3.5z" fill="#666"/>
<rect x="122" y="195" width="2" height="2" fill="#999" />
<rect x="122" y="199.5" width="2" height="2" fill="#999" />
<rect x="122" y="204" width="2" height="2" fill="#999" />
<rect x="138.5" y="185.5" width="109" height="29" fill="#fff" stroke="#c6c6c6" stroke-width="1" />
<path d="M149.5 193.5l14 13.5M163.5 193.5l-14 13.5" stroke="#c3c3c3" stroke-width="2" shape-rendering="geometricPrecision"/>
<path d="M185 201l5 5.5 11.5-12.5" fill="none" stroke="#c3c3c3" stroke-width="2.2" shape-rendering="geometricPrecision"/>
<text x="220" y="206" font-family="Liberation Serif" font-size="18" font-style="italic" fill="#666" textLength="17" lengthAdjust="spacingAndGlyphs">fx</text>
<rect x="251.5" y="185.5" width="1363" height="29" fill="#fff" stroke="#c6c6c6" stroke-width="1" />
<text x="264.5" y="206.0" font-family="Liberation Sans" font-size="15" font-weight="normal" font-style="normal" fill="#222" textLength="29.5" lengthAdjust="spacingAndGlyphs" >LUA</text>
<path d="M1599.5 196.5l4.5 4.5 4.5-4.5" fill="none" stroke="#555" stroke-width="1.5" shape-rendering="geometricPrecision"/>
<rect x="0" y="225" width="1594" height="21" fill="#fff" />
<rect x="411" y="225" width="46" height="20" fill="#e1e1e1" />
<text x="223.0" y="241.8" font-family="Liberation Sans" font-size="16.5" font-weight="normal" fill="#444" text-anchor="middle">B</text>
<line x1="411.5" y1="225" x2="411.5" y2="246" stroke="#c6c6c6" stroke-width="1"/>
<text x="434.0" y="241.8" font-family="Liberation Sans" font-size="16.5" font-weight="bold" fill="#217346" text-anchor="middle">C</text>
<line x1="456.5" y1="225" x2="456.5" y2="246" stroke="#c6c6c6" stroke-width="1"/>
<text x="502.0" y="241.8" font-family="Liberation Sans" font-size="16.5" font-weight="normal" fill="#444" text-anchor="middle">D</text>
<line x1="547.5" y1="225" x2="547.5" y2="246" stroke="#e1e1e1" stroke-width="1"/>
<text x="592.0" y="241.8" font-family="Liberation Sans" font-size="16.5" font-weight="normal" fill="#444" text-anchor="middle">E</text>
<line x1="636.5" y1="225" x2="636.5" y2="246" stroke="#e1e1e1" stroke-width="1"/>
<text x="681.5" y="241.8" font-family="Liberation Sans" font-size="16.5" font-weight="normal" fill="#444" text-anchor="middle">F</text>
<line x1="726.5" y1="225" x2="726.5" y2="246" stroke="#e1e1e1" stroke-width="1"/>
<text x="767.0" y="241.8" font-family="Liberation Sans" font-size="16.5" font-weight="normal" fill="#444" text-anchor="middle">G</text>
<line x1="807.5" y1="225" x2="807.5" y2="246" stroke="#e1e1e1" stroke-width="1"/>
<text x="851.0" y="241.8" font-family="Liberation Sans" font-size="16.5" font-weight="normal" fill="#444" text-anchor="middle">H</text>
<line x1="894.5" y1="225" x2="894.5" y2="246" stroke="#e1e1e1" stroke-width="1"/>
<text x="933.0" y="241.8" font-family="Liberation Sans" font-size="16.5" font-weight="normal" fill="#444" text-anchor="middle">I</text>
<line x1="971.5" y1="225" x2="971.5" y2="246" stroke="#e1e1e1" stroke-width="1"/>
<text x="1012.5" y="241.8" font-family="Liberation Sans" font-size="16.5" font-weight="normal" fill="#444" text-anchor="middle">J</text>
<line x1="1053.5" y1="225" x2="1053.5" y2="246" stroke="#e1e1e1" stroke-width="1"/>
<text x="1097.0" y="241.8" font-family="Liberation Sans" font-size="16.5" font-weight="normal" fill="#444" text-anchor="middle">K</text>
<line x1="1140.5" y1="225" x2="1140.5" y2="246" stroke="#e1e1e1" stroke-width="1"/>
<text x="1183.0" y="241.8" font-family="Liberation Sans" font-size="16.5" font-weight="normal" fill="#444" text-anchor="middle">L</text>
<line x1="1225.5" y1="225" x2="1225.5" y2="246" stroke="#e1e1e1" stroke-width="1"/>
<text x="1268.0" y="241.8" font-family="Liberation Sans" font-size="16.5" font-weight="normal" fill="#444" text-anchor="middle">M</text>
<line x1="1310.5" y1="225" x2="1310.5" y2="246" stroke="#e1e1e1" stroke-width="1"/>
<text x="1353.0" y="241.8" font-family="Liberation Sans" font-size="16.5" font-weight="normal" fill="#444" text-anchor="middle">N</text>
<line x1="1395.5" y1="225" x2="1395.5" y2="246" stroke="#e1e1e1" stroke-width="1"/>
<text x="1445.5" y="241.8" font-family="Liberation Sans" font-size="16.5" font-weight="normal" fill="#444" text-anchor="middle">O</text>
<line x1="1495.5" y1="225" x2="1495.5" y2="246" stroke="#e1e1e1" stroke-width="1"/>
<text x="1540.5" y="241.8" font-family="Liberation Sans" font-size="16.5" font-weight="normal" fill="#444" text-anchor="middle">P</text>
<line x1="1585.5" y1="225" x2="1585.5" y2="246" stroke="#e1e1e1" stroke-width="1"/>
<line x1="1585.5" y1="225" x2="1585.5" y2="246" stroke="#e1e1e1" stroke-width="1"/>
<path d="M17 243L31 229V243Z" fill="#dfdfdf"/>
<line x1="2" y1="246.5" x2="34" y2="246.5" stroke="#d6d6d6" stroke-width="1"/>
<line x1="34" y1="246.5" x2="1595" y2="246.5" stroke="#ababab" stroke-width="1"/>
<rect x="411" y="245" width="46" height="2" fill="#217346" />
<line x1="34.5" y1="225" x2="34.5" y2="246" stroke="#d6d6d6" stroke-width="1"/>
<line x1="34.5" y1="246" x2="34.5" y2="815" stroke="#ababab" stroke-width="1"/>
<line x1="2" y1="272.5" x2="34" y2="272.5" stroke="#e1e1e1" stroke-width="1"/>
<line x1="2" y1="297.5" x2="34" y2="297.5" stroke="#e1e1e1" stroke-width="1"/>
<line x1="2" y1="347.5" x2="34" y2="347.5" stroke="#e1e1e1" stroke-width="1"/>
<line x1="2" y1="374.5" x2="34" y2="374.5" stroke="#e1e1e1" stroke-width="1"/>
<line x1="2" y1="394.5" x2="34" y2="394.5" stroke="#e1e1e1" stroke-width="1"/>
<line x1="2" y1="424.5" x2="34" y2="424.5" stroke="#e1e1e1" stroke-width="1"/>
<line x1="2" y1="469.5" x2="34" y2="469.5" stroke="#e1e1e1" stroke-width="1"/>
<line x1="2" y1="490.5" x2="34" y2="490.5" stroke="#e1e1e1" stroke-width="1"/>
<line x1="2" y1="565.5" x2="34" y2="565.5" stroke="#e1e1e1" stroke-width="1"/>
<line x1="2" y1="584.5" x2="34" y2="584.5" stroke="#e1e1e1" stroke-width="1"/>
<line x1="2" y1="607.5" x2="34" y2="607.5" stroke="#e1e1e1" stroke-width="1"/>
<line x1="2" y1="630.5" x2="34" y2="630.5" stroke="#e1e1e1" stroke-width="1"/>
<line x1="2" y1="653.5" x2="34" y2="653.5" stroke="#e1e1e1" stroke-width="1"/>
<line x1="2" y1="676.5" x2="34" y2="676.5" stroke="#e1e1e1" stroke-width="1"/>
<line x1="2" y1="699.5" x2="34" y2="699.5" stroke="#e1e1e1" stroke-width="1"/>
<line x1="2" y1="722.5" x2="34" y2="722.5" stroke="#e1e1e1" stroke-width="1"/>
<line x1="2" y1="745.5" x2="34" y2="745.5" stroke="#e1e1e1" stroke-width="1"/>
<line x1="2" y1="768.5" x2="34" y2="768.5" stroke="#e1e1e1" stroke-width="1"/>
<line x1="2" y1="791.5" x2="34" y2="791.5" stroke="#e1e1e1" stroke-width="1"/>
<line x1="2" y1="814.5" x2="34" y2="814.5" stroke="#e1e1e1" stroke-width="1"/>
<text x="18" y="267" font-family="Liberation Sans" font-size="16.5" font-weight="normal" fill="#444" text-anchor="middle">1</text>
<text x="18" y="292" font-family="Liberation Sans" font-size="16.5" font-weight="normal" fill="#444" text-anchor="middle">2</text>
<text x="18" y="342" font-family="Liberation Sans" font-size="16.5" font-weight="normal" fill="#444" text-anchor="middle">3</text>
<text x="18" y="369" font-family="Liberation Sans" font-size="16.5" font-weight="normal" fill="#444" text-anchor="middle">4</text>
<text x="18" y="389" font-family="Liberation Sans" font-size="16.5" font-weight="normal" fill="#444" text-anchor="middle">5</text>
<text x="18" y="419" font-family="Liberation Sans" font-size="16.5" font-weight="normal" fill="#444" text-anchor="middle">6</text>
<text x="18" y="464" font-family="Liberation Sans" font-size="16.5" font-weight="normal" fill="#444" text-anchor="middle">7</text>
<text x="18" y="485" font-family="Liberation Sans" font-size="16.5" font-weight="normal" fill="#444" text-anchor="middle">8</text>
<text x="18" y="560" font-family="Liberation Sans" font-size="16.5" font-weight="normal" fill="#444" text-anchor="middle">9</text>
<text x="18" y="579" font-family="Liberation Sans" font-size="16.5" font-weight="normal" fill="#444" text-anchor="middle">10</text>
<text x="18" y="602" font-family="Liberation Sans" font-size="16.5" font-weight="normal" fill="#444" text-anchor="middle">11</text>
<text x="18" y="625" font-family="Liberation Sans" font-size="16.5" font-weight="normal" fill="#444" text-anchor="middle">12</text>
<text x="18" y="648" font-family="Liberation Sans" font-size="16.5" font-weight="normal" fill="#444" text-anchor="middle">13</text>
<text x="18" y="671" font-family="Liberation Sans" font-size="16.5" font-weight="normal" fill="#444" text-anchor="middle">14</text>
<rect x="1" y="677" width="32" height="22" fill="#e1e1e1" />
<line x1="1" y1="676.5" x2="34" y2="676.5" stroke="#c6c6c6" stroke-width="1"/>
<line x1="1" y1="699.5" x2="34" y2="699.5" stroke="#c6c6c6" stroke-width="1"/>
<rect x="33" y="676" width="2" height="24" fill="#217346" />
<text x="18" y="694" font-family="Liberation Sans" font-size="16.5" font-weight="bold" fill="#217346" text-anchor="middle">15</text>
<text x="18" y="717" font-family="Liberation Sans" font-size="16.5" font-weight="normal" fill="#444" text-anchor="middle">16</text>
<text x="18" y="740" font-family="Liberation Sans" font-size="16.5" font-weight="normal" fill="#444" text-anchor="middle">17</text>
<text x="18" y="763" font-family="Liberation Sans" font-size="16.5" font-weight="normal" fill="#444" text-anchor="middle">18</text>
<text x="18" y="786" font-family="Liberation Sans" font-size="16.5" font-weight="normal" fill="#444" text-anchor="middle">19</text>
<text x="18" y="809" font-family="Liberation Sans" font-size="16.5" font-weight="normal" fill="#444" text-anchor="middle">20</text>
<line x1="35" y1="272.5" x2="1594" y2="272.5" stroke="#d9d9d9" stroke-width="1"/>
<line x1="35" y1="297.5" x2="1594" y2="297.5" stroke="#d9d9d9" stroke-width="1"/>
<line x1="35" y1="347.5" x2="1594" y2="347.5" stroke="#d9d9d9" stroke-width="1"/>
<line x1="35" y1="374.5" x2="1594" y2="374.5" stroke="#d9d9d9" stroke-width="1"/>
<line x1="411.5" y1="247" x2="411.5" y2="394" stroke="#d9d9d9" stroke-width="1"/>
<line x1="456.5" y1="348" x2="456.5" y2="394" stroke="#d9d9d9" stroke-width="1"/>
<line x1="1495.5" y1="247" x2="1495.5" y2="394" stroke="#d9d9d9" stroke-width="1"/>
<line x1="547.5" y1="375" x2="547.5" y2="394" stroke="#d9d9d9" stroke-width="1"/>
<line x1="636.5" y1="375" x2="636.5" y2="394" stroke="#d9d9d9" stroke-width="1"/>
<line x1="726.5" y1="375" x2="726.5" y2="394" stroke="#d9d9d9" stroke-width="1"/>
<line x1="807.5" y1="375" x2="807.5" y2="394" stroke="#d9d9d9" stroke-width="1"/>
<line x1="894.5" y1="375" x2="894.5" y2="394" stroke="#d9d9d9" stroke-width="1"/>
<line x1="971.5" y1="375" x2="971.5" y2="394" stroke="#d9d9d9" stroke-width="1"/>
<line x1="1053.5" y1="375" x2="1053.5" y2="394" stroke="#d9d9d9" stroke-width="1"/>
<line x1="1140.5" y1="375" x2="1140.5" y2="394" stroke="#d9d9d9" stroke-width="1"/>
<line x1="1225.5" y1="375" x2="1225.5" y2="394" stroke="#d9d9d9" stroke-width="1"/>
<line x1="1310.5" y1="375" x2="1310.5" y2="394" stroke="#d9d9d9" stroke-width="1"/>
<line x1="1395.5" y1="375" x2="1395.5" y2="394" stroke="#d9d9d9" stroke-width="1"/>
<line x1="1594.5" y1="247" x2="1594.5" y2="815" stroke="#b4b4b4" stroke-width="1"/>
<rect x="35" y="393" width="1559" height="2" fill="#000" />
<line x1="547" y1="424.5" x2="1594" y2="424.5" stroke="#000" stroke-width="1"/>
<line x1="726" y1="469.5" x2="1225" y2="469.5" stroke="#000" stroke-width="1"/>
<line x1="35" y1="565.5" x2="1594" y2="565.5" stroke="#000" stroke-width="1"/>
<line x1="35" y1="584.5" x2="1594" y2="584.5" stroke="#000" stroke-width="1"/>
<line x1="411.5" y1="395" x2="411.5" y2="815" stroke="#000" stroke-width="1"/>
<line x1="456.5" y1="395" x2="456.5" y2="815" stroke="#000" stroke-width="1"/>
<line x1="547.5" y1="395" x2="547.5" y2="815" stroke="#000" stroke-width="1"/>
<line x1="1395.5" y1="395" x2="1395.5" y2="815" stroke="#000" stroke-width="1"/>
<line x1="636.5" y1="425" x2="636.5" y2="815" stroke="#000" stroke-width="1"/>
<line x1="726.5" y1="425" x2="726.5" y2="815" stroke="#000" stroke-width="1"/>
<line x1="1053.5" y1="425" x2="1053.5" y2="815" stroke="#000" stroke-width="1"/>
<line x1="1225.5" y1="425" x2="1225.5" y2="815" stroke="#000" stroke-width="1"/>
<line x1="1310.5" y1="425" x2="1310.5" y2="815" stroke="#000" stroke-width="1"/>
<line x1="1495.5" y1="425" x2="1495.5" y2="815" stroke="#000" stroke-width="1"/>
<line x1="1585.5" y1="425" x2="1585.5" y2="815" stroke="#000" stroke-width="1"/>
<line x1="807.5" y1="470" x2="807.5" y2="815" stroke="#000" stroke-width="1"/>
<line x1="894.5" y1="470" x2="894.5" y2="815" stroke="#000" stroke-width="1"/>
<line x1="971.5" y1="470" x2="971.5" y2="815" stroke="#000" stroke-width="1"/>
<line x1="1140.5" y1="470" x2="1140.5" y2="815" stroke="#000" stroke-width="1"/>
<line x1="35" y1="607.5" x2="1594" y2="607.5" stroke="#000" stroke-width="1" stroke-dasharray="1 1"/>
<line x1="35" y1="630.5" x2="1594" y2="630.5" stroke="#000" stroke-width="1" stroke-dasharray="1 1"/>
<line x1="35" y1="653.5" x2="1594" y2="653.5" stroke="#000" stroke-width="1" stroke-dasharray="1 1"/>
<line x1="35" y1="676.5" x2="1594" y2="676.5" stroke="#000" stroke-width="1" stroke-dasharray="1 1"/>
<line x1="35" y1="699.5" x2="1594" y2="699.5" stroke="#000" stroke-width="1" stroke-dasharray="1 1"/>
<line x1="35" y1="722.5" x2="1594" y2="722.5" stroke="#000" stroke-width="1" stroke-dasharray="1 1"/>
<line x1="35" y1="745.5" x2="1594" y2="745.5" stroke="#000" stroke-width="1" stroke-dasharray="1 1"/>
<line x1="35" y1="768.5" x2="1594" y2="768.5" stroke="#000" stroke-width="1" stroke-dasharray="1 1"/>
<line x1="35" y1="791.5" x2="1594" y2="791.5" stroke="#000" stroke-width="1" stroke-dasharray="1 1"/>
<line x1="35" y1="814.5" x2="1594" y2="814.5" stroke="#000" stroke-width="1" stroke-dasharray="1 1"/>
<path d="M35 566h6l-6 6z" fill="#008000"/>
<path d="M412 566h6l-6 6z" fill="#008000"/>
<path d="M637 566h6l-6 6z" fill="#008000"/>
<path d="M727 566h6l-6 6z" fill="#008000"/>
<text x="754.5" y="267.0" font-family="Liberation Sans" font-size="20" font-weight="bold" font-style="normal" fill="#000" textLength="397.0" lengthAdjust="spacingAndGlyphs" >CỘNG HÒA XÃ HỘI CHỦ NGHĨA VIỆT NAM</text>
<text x="818.5" y="292.0" font-family="Liberation Sans" font-size="20" font-weight="bold" font-style="normal" fill="#000" textLength="269.0" lengthAdjust="spacingAndGlyphs" >Độc lập - Tự do - Hạnh Phúc</text>
<rect x="818" y="294" width="270" height="2" fill="#000" />
<text x="37.5" y="343.0" font-family="Liberation Sans" font-size="14.67" font-weight="bold" font-style="normal" fill="#000" textLength="99.0" lengthAdjust="spacingAndGlyphs" >Biểu 01/TKĐĐ</text>
<text x="778.5" y="343.0" font-family="Liberation Sans" font-size="17.5" font-weight="bold" font-style="normal" fill="#000" textLength="351.5" lengthAdjust="spacingAndGlyphs" >THỐNG KÊ, KIỂM KÊ DIỆN TÍCH ĐẤT ĐAI</text>
<text x="891.5" y="370.0" font-family="Liberation Sans" font-size="16.3" font-weight="normal" font-style="normal" fill="#000" textLength="170.0" lengthAdjust="spacingAndGlyphs" >(Đến ngày 31/12/2017)</text>
<svg x="1496" y="247" width="98" height="128" overflow="hidden">
<text x="2.5" y="14" font-family="Liberation Sans" font-size="14.67" fill="#000">Đơn vị báo cáo</text>
<text x="2.5" y="40" font-family="Liberation Sans" font-size="14.67" fill="#000">Thị trấn Chợ Rã</text>
<text x="2.5" y="80" font-family="Liberation Sans" font-size="14.67" fill="#000">Huyện Ba Bể</text>
<text x="2.5" y="118" font-family="Liberation Sans" font-size="14.67" fill="#000">Bắc Kạn</text>
</svg>
<text x="185.5" y="486.0" font-family="Liberation Sans" font-size="16" font-weight="bold" font-style="normal" fill="#000" textLength="76.5" lengthAdjust="spacingAndGlyphs" >LOẠI ĐẤT</text>
<text x="424.5" y="485.0" font-family="Liberation Sans" font-size="14.67" font-weight="bold" font-style="normal" fill="#000" textLength="20.5" lengthAdjust="spacingAndGlyphs" >Mã</text>
<text x="501.5" y="447" font-family="Liberation Sans" font-size="14.67" font-weight="normal" fill="#000" text-anchor="middle">Tổng diện</text>
<text x="501.5" y="466" font-family="Liberation Sans" font-size="14.67" font-weight="normal" fill="#000" text-anchor="middle">tích các loại</text>
<text x="501.5" y="485" font-family="Liberation Sans" font-size="14.67" font-weight="normal" fill="#000" text-anchor="middle">đất trong</text>
<text x="501.5" y="504" font-family="Liberation Sans" font-size="14.67" font-weight="normal" fill="#000" text-anchor="middle">đơn vị hành</text>
<text x="501.5" y="522.5" font-family="Liberation Sans" font-size="14.67" font-weight="normal" fill="#000" text-anchor="middle">chính</text>
<text x="591.5" y="500.5" font-family="Liberation Sans" font-size="16" font-weight="normal" fill="#000" text-anchor="middle">Tổng số</text>
<text x="681" y="471.5" font-family="Liberation Sans" font-size="14.67" font-weight="normal" fill="#000" text-anchor="middle">Hộ gia đình,</text>
<text x="681" y="490.5" font-family="Liberation Sans" font-size="14.67" font-weight="normal" fill="#000" text-anchor="middle">cá nhân</text>
<text x="681" y="509.5" font-family="Liberation Sans" font-size="14.67" font-weight="normal" fill="#000" text-anchor="middle">trong nước</text>
<text x="681" y="528" font-family="Liberation Sans" font-size="14.67" font-weight="normal" fill="#000" text-anchor="middle">(GDC)</text>
<text x="824.5" y="415.0" font-family="Liberation Sans" font-size="16" font-weight="bold" font-style="normal" fill="#000" textLength="292.5" lengthAdjust="spacingAndGlyphs" >Diện tích đất theo đối tượng sử dụng</text>
<text x="802.0" y="451.0" font-family="Liberation Sans" font-size="14.67" font-weight="normal" font-style="normal" fill="#000" textLength="176.0" lengthAdjust="spacingAndGlyphs" >Tổ chức trong nước (TCC)</text>
<text x="766.5" y="513" font-family="Liberation Sans" font-size="13.33" font-weight="normal" fill="#000" text-anchor="middle">Tổ chức kinh</text>
<text x="766.5" y="529.5" font-family="Liberation Sans" font-size="13.33" font-weight="normal" fill="#000" text-anchor="middle">tế (TKT)</text>
<text x="850.5" y="505" font-family="Liberation Sans" font-size="13.33" font-weight="normal" fill="#000" text-anchor="middle">Cơ quan, đơn</text>
<text x="850.5" y="521.5" font-family="Liberation Sans" font-size="13.33" font-weight="normal" fill="#000" text-anchor="middle">vị của Nhà</text>
<text x="850.5" y="538" font-family="Liberation Sans" font-size="13.33" font-weight="normal" fill="#000" text-anchor="middle">nước (TCN)</text>
<text x="932.5" y="505" font-family="Liberation Sans" font-size="13.33" font-weight="normal" fill="#000" text-anchor="middle">Tổ chức sự</text>
<text x="932.5" y="522" font-family="Liberation Sans" font-size="13.33" font-weight="normal" fill="#000" text-anchor="middle">nghiệp công</text>
<text x="932.5" y="538.5" font-family="Liberation Sans" font-size="13.33" font-weight="normal" fill="#000" text-anchor="middle">lập (TSN)</text>
<text x="1012" y="513" font-family="Liberation Sans" font-size="13.33" font-weight="normal" fill="#000" text-anchor="middle">Tổ chức</text>
<text x="1012" y="529.5" font-family="Liberation Sans" font-size="13.33" font-weight="normal" fill="#000" text-anchor="middle">khác (TKH)</text>
<text x="1139.5" y="445.5" font-family="Liberation Sans" font-size="14.67" font-weight="normal" fill="#000" text-anchor="middle">Tổ chức nước ngoài</text>
<text x="1139.5" y="464.5" font-family="Liberation Sans" font-size="14.67" font-weight="normal" fill="#000" text-anchor="middle">(NNG)</text>
<text x="1096.5" y="496" font-family="Liberation Sans" font-size="12.67" font-weight="normal" fill="#000" text-anchor="middle">Doanh nghiệp</text>
<text x="1096.5" y="513" font-family="Liberation Sans" font-size="12.67" font-weight="normal" fill="#000" text-anchor="middle">có vốn đầu tư</text>
<text x="1096.5" y="529.5" font-family="Liberation Sans" font-size="12.67" font-weight="normal" fill="#000" text-anchor="middle">nước ngoài</text>
<text x="1096.5" y="546.5" font-family="Liberation Sans" font-size="12.67" font-weight="normal" fill="#000" text-anchor="middle">(TVN)</text>
<text x="1182.5" y="505" font-family="Liberation Sans" font-size="12.67" font-weight="normal" fill="#000" text-anchor="middle">Tổ chức</text>
<text x="1182.5" y="522" font-family="Liberation Sans" font-size="12.67" font-weight="normal" fill="#000" text-anchor="middle">ngoại giao</text>
<text x="1182.5" y="538.5" font-family="Liberation Sans" font-size="12.67" font-weight="normal" fill="#000" text-anchor="middle">(TNG)</text>
<text x="1267.5" y="472" font-family="Liberation Sans" font-size="14.67" font-weight="normal" fill="#000" text-anchor="middle">Người Việt</text>
<text x="1267.5" y="491" font-family="Liberation Sans" font-size="14.67" font-weight="normal" fill="#000" text-anchor="middle">Nam định</text>
<text x="1267.5" y="510" font-family="Liberation Sans" font-size="14.67" font-weight="normal" fill="#000" text-anchor="middle">cư ở nước</text>
<text x="1267.5" y="529" font-family="Liberation Sans" font-size="14.67" font-weight="normal" fill="#000" text-anchor="middle">ngoài (CNN)</text>
<text x="1352.5" y="472" font-family="Liberation Sans" font-size="14.67" font-weight="normal" fill="#000" text-anchor="middle">Cộng đồng</text>
<text x="1352.5" y="491" font-family="Liberation Sans" font-size="14.67" font-weight="normal" fill="#000" text-anchor="middle">dân cư và</text>
<text x="1352.5" y="510" font-family="Liberation Sans" font-size="14.67" font-weight="normal" fill="#000" text-anchor="middle">Cơ sở tôn</text>
<text x="1352.5" y="529" font-family="Liberation Sans" font-size="14.67" font-weight="normal" fill="#000" text-anchor="middle">giáo (CDS)</text>
<svg x="1396" y="395" width="198" height="29" overflow="hidden">
<text x="57.5" y="14.5" font-family="Liberation Sans" font-size="14.67" font-weight="bold" fill="#000">Diện tích đất theo đối tượng sử dụng</text>
</svg>
<text x="1445" y="499.5" font-family="Liberation Sans" font-size="14.67" font-weight="normal" fill="#000" text-anchor="middle">Tổng số</text>
<text x="1540" y="491" font-family="Liberation Sans" font-size="14.67" font-weight="normal" fill="#000" text-anchor="middle">UBND cấp</text>
<text x="1540" y="510" font-family="Liberation Sans" font-size="14.67" font-weight="normal" fill="#000" text-anchor="middle">xã (UBQ)</text>
<text x="223" y="581" font-family="Liberation Sans" font-size="13.8" fill="#000" text-anchor="middle">(2)</text>
<text x="433.5" y="581" font-family="Liberation Sans" font-size="13.8" fill="#000" text-anchor="middle">(3)</text>
<text x="681" y="581" font-family="Liberation Sans" font-size="13.8" fill="#000" text-anchor="middle">(6)</text>
<text x="766.5" y="581" font-family="Liberation Sans" font-size="13.8" fill="#000" text-anchor="middle">(7)</text>
<text x="850.5" y="581" font-family="Liberation Sans" font-size="13.8" fill="#000" text-anchor="middle">(8)</text>
<text x="932.5" y="581" font-family="Liberation Sans" font-size="13.8" fill="#000" text-anchor="middle">(9)</text>
<text x="1012" y="581" font-family="Liberation Sans" font-size="13.8" fill="#000" text-anchor="middle">(10)</text>
<text x="1096.5" y="581" font-family="Liberation Sans" font-size="13.8" fill="#000" text-anchor="middle">(11)</text>
<text x="1182.5" y="581" font-family="Liberation Sans" font-size="13.8" fill="#000" text-anchor="middle">(12)</text>
<text x="1267.5" y="581" font-family="Liberation Sans" font-size="13.8" fill="#000" text-anchor="middle">(13)</text>
<text x="1352.5" y="581" font-family="Liberation Sans" font-size="13.8" fill="#000" text-anchor="middle">(14)</text>
<text x="1540" y="581" font-family="Liberation Sans" font-size="13.8" fill="#000" text-anchor="middle">(16)</text>
<text x="467.5" y="581.0" font-family="Liberation Sans" font-size="13.5" font-weight="normal" font-style="normal" fill="#000" textLength="68.5" lengthAdjust="spacingAndGlyphs" >(4)=(5)+(15)</text>
<text x="548.5" y="580.0" font-family="Liberation Sans" font-size="10" font-weight="normal" font-style="normal" fill="#000" textLength="86.0" lengthAdjust="spacingAndGlyphs" >(5)=(8)+(9)+...+(14)</text>
<text x="1405.0" y="580.0" font-family="Liberation Sans" font-size="10" font-weight="normal" font-style="normal" fill="#000" textLength="81.0" lengthAdjust="spacingAndGlyphs" >(15)=(16)+...+(18)</text>
<text x="37.5" y="602.4" font-family="Liberation Sans" font-size="14.8" font-weight="bold" font-style="normal" fill="#000">Tổng diện tích đất của đơn vị hành chính (1+2+3)</text>
<text x="544" y="602" font-family="Liberation Sans" font-size="16.3" font-weight="normal" font-style="normal" fill="#000" text-anchor="end">460.62</text>
<text x="633" y="602" font-family="Liberation Sans" font-size="16.3" font-weight="normal" font-style="normal" fill="#000" text-anchor="end">414.76</text>
<text x="723" y="602" font-family="Liberation Sans" font-size="16.3" font-weight="normal" font-style="normal" fill="#000" text-anchor="end">241.5</text>
<text x="804" y="602" font-family="Liberation Sans" font-size="16.3" font-weight="normal" font-style="normal" fill="#000" text-anchor="end">124.59</text>
<text x="891" y="602" font-family="Liberation Sans" font-size="16.3" font-weight="normal" font-style="normal" fill="#000" text-anchor="end">30.41</text>
<text x="968" y="602" font-family="Liberation Sans" font-size="16.3" font-weight="normal" font-style="normal" fill="#000" text-anchor="end">17.98</text>
<text x="1392" y="602" font-family="Liberation Sans" font-size="16.3" font-weight="normal" font-style="normal" fill="#000" text-anchor="end">0.28</text>
<text x="1492" y="602" font-family="Liberation Sans" font-size="16.3" font-weight="normal" font-style="normal" fill="#000" text-anchor="end">45.86</text>
<text x="1582" y="602" font-family="Liberation Sans" font-size="16.3" font-weight="normal" font-style="normal" fill="#000" text-anchor="end">23.34</text>
<text x="36.5" y="625.4" font-family="Liberation Sans" font-size="14.8" font-weight="bold" font-style="normal" fill="#000">Đất nông nghiệp</text>
<text x="434" y="626" font-family="Liberation Sans" font-size="12.67" font-weight="bold" font-style="normal" fill="#000" text-anchor="middle">NNP</text>
<text x="544" y="625" font-family="Liberation Sans" font-size="16.3" font-weight="normal" font-style="normal" fill="#000" text-anchor="end">334.54</text>
<text x="633" y="625" font-family="Liberation Sans" font-size="16.3" font-weight="normal" font-style="normal" fill="#000" text-anchor="end">334.54</text>
<text x="723" y="625" font-family="Liberation Sans" font-size="16.3" font-weight="normal" font-style="normal" fill="#000" text-anchor="end">212.04</text>
<text x="804" y="625" font-family="Liberation Sans" font-size="16.3" font-weight="normal" font-style="normal" fill="#000" text-anchor="end">122.5</text>
<text x="36.5" y="648.4" font-family="Liberation Sans" font-size="14.8" font-weight="bold" font-style="italic" fill="#000">Đất sản xuất nông nghiệp</text>
<text x="434" y="649" font-family="Liberation Sans" font-size="12.67" font-weight="bold" font-style="italic" fill="#000" text-anchor="middle">SXN</text>
<text x="544" y="648" font-family="Liberation Sans" font-size="16.3" font-weight="normal" font-style="normal" fill="#000" text-anchor="end">102.25</text>
<text x="633" y="648" font-family="Liberation Sans" font-size="16.3" font-weight="normal" font-style="normal" fill="#000" text-anchor="end">102.25</text>
<text x="723" y="648" font-family="Liberation Sans" font-size="16.3" font-weight="normal" font-style="normal" fill="#000" text-anchor="end">102.25</text>
<text x="36.5" y="671.4" font-family="Liberation Sans" font-size="14.67" font-weight="normal" font-style="normal" fill="#000">Đất trồng cây hàng năm</text>
<text x="434" y="672" font-family="Liberation Sans" font-size="12.67" font-weight="normal" font-style="normal" fill="#000" text-anchor="middle">CHN</text>
<text x="544" y="671" font-family="Liberation Sans" font-size="16.3" font-weight="normal" font-style="normal" fill="#000" text-anchor="end">72.33</text>
<text x="633" y="671" font-family="Liberation Sans" font-size="16.3" font-weight="normal" font-style="normal" fill="#000" text-anchor="end">72.33</text>
<text x="723" y="671" font-family="Liberation Sans" font-size="16.3" font-weight="normal" font-style="normal" fill="#000" text-anchor="end">72.33</text>
<text x="48.5" y="694.4" font-family="Liberation Sans" font-size="14.67" font-weight="normal" font-style="normal" fill="#000">Đất trồng lúa</text>
<text x="434" y="695" font-family="Liberation Sans" font-size="12.67" font-weight="normal" font-style="normal" fill="#000" text-anchor="middle">LUA</text>
<text x="544" y="694" font-family="Liberation Sans" font-size="16.3" font-weight="normal" font-style="normal" fill="#000" text-anchor="end">31.58</text>
<text x="633" y="694" font-family="Liberation Sans" font-size="16.3" font-weight="normal" font-style="normal" fill="#000" text-anchor="end">31.58</text>
<text x="723" y="694" font-family="Liberation Sans" font-size="16.3" font-weight="normal" font-style="normal" fill="#000" text-anchor="end">31.58</text>
<text x="48.5" y="717.4" font-family="Liberation Sans" font-size="14.67" font-weight="normal" font-style="normal" fill="#000">Đất trồng cây hàng năm khác</text>
<text x="434" y="718" font-family="Liberation Sans" font-size="12.67" font-weight="normal" font-style="normal" fill="#000" text-anchor="middle">HNK</text>
<text x="544" y="717" font-family="Liberation Sans" font-size="16.3" font-weight="normal" font-style="normal" fill="#000" text-anchor="end">40.75</text>
<text x="633" y="717" font-family="Liberation Sans" font-size="16.3" font-weight="normal" font-style="normal" fill="#000" text-anchor="end">40.75</text>
<text x="723" y="717" font-family="Liberation Sans" font-size="16.3" font-weight="normal" font-style="normal" fill="#000" text-anchor="end">40.75</text>
<text x="36.5" y="740.4" font-family="Liberation Sans" font-size="14.67" font-weight="normal" font-style="normal" fill="#000">Đất trồng cây lâu năm</text>
<text x="434" y="741" font-family="Liberation Sans" font-size="12.67" font-weight="normal" font-style="normal" fill="#000" text-anchor="middle">CLN</text>
<text x="544" y="740" font-family="Liberation Sans" font-size="16.3" font-weight="normal" font-style="normal" fill="#000" text-anchor="end">29.92</text>
<text x="633" y="740" font-family="Liberation Sans" font-size="16.3" font-weight="normal" font-style="normal" fill="#000" text-anchor="end">29.92</text>
<text x="723" y="740" font-family="Liberation Sans" font-size="16.3" font-weight="normal" font-style="normal" fill="#000" text-anchor="end">29.92</text>
<text x="36.5" y="763.4" font-family="Liberation Sans" font-size="14.8" font-weight="bold" font-style="italic" fill="#000">Đất lâm nghiệp</text>
<text x="434" y="764" font-family="Liberation Sans" font-size="12.67" font-weight="bold" font-style="italic" fill="#000" text-anchor="middle">LNP</text>
<text x="544" y="763" font-family="Liberation Sans" font-size="16.3" font-weight="normal" font-style="normal" fill="#000" text-anchor="end">231.35</text>
<text x="633" y="763" font-family="Liberation Sans" font-size="16.3" font-weight="normal" font-style="normal" fill="#000" text-anchor="end">231.35</text>
<text x="723" y="763" font-family="Liberation Sans" font-size="16.3" font-weight="normal" font-style="normal" fill="#000" text-anchor="end">108.85</text>
<text x="804" y="763" font-family="Liberation Sans" font-size="16.3" font-weight="normal" font-style="normal" fill="#000" text-anchor="end">122.5</text>
<text x="44.5" y="786.4" font-family="Liberation Sans" font-size="14.67" font-weight="normal" font-style="normal" fill="#000">Đất rừng sản xuất</text>
<text x="434" y="787" font-family="Liberation Sans" font-size="12.67" font-weight="normal" font-style="normal" fill="#000" text-anchor="middle">RSX</text>
<text x="544" y="786" font-family="Liberation Sans" font-size="16.3" font-weight="normal" font-style="normal" fill="#000" text-anchor="end">231.35</text>
<text x="633" y="786" font-family="Liberation Sans" font-size="16.3" font-weight="normal" font-style="normal" fill="#000" text-anchor="end">231.35</text>
<text x="723" y="786" font-family="Liberation Sans" font-size="16.3" font-weight="normal" font-style="normal" fill="#000" text-anchor="end">108.85</text>
<text x="804" y="786" font-family="Liberation Sans" font-size="16.3" font-weight="normal" font-style="normal" fill="#000" text-anchor="end">122.5</text>
<text x="44.5" y="809.4" font-family="Liberation Sans" font-size="14.67" font-weight="normal" font-style="normal" fill="#000">Đất rừng phòng hộ</text>
<text x="434" y="810" font-family="Liberation Sans" font-size="12.67" font-weight="normal" font-style="normal" fill="#000" text-anchor="middle">RPH</text>
<rect x="410" y="675" width="47" height="2" fill="#217346" />
<rect x="410" y="698" width="47" height="2" fill="#217346" />
<rect x="410" y="675" width="2" height="25" fill="#217346" />
<rect x="455" y="675" width="2" height="22" fill="#217346" />
<rect x="454" y="697" width="5" height="5" fill="#217346" />
<rect x="453" y="696" width="1" height="1" fill="#fff" />
<rect x="739.5" y="175.5" width="259" height="137" fill="#fff" stroke="#c6c6c6" stroke-width="1" shape-rendering="crispEdges"/>
<text x="751.5" y="198.0" font-family="Liberation Sans" font-size="15" font-weight="bold" font-style="normal" fill="#505050" textLength="112.5" lengthAdjust="spacingAndGlyphs" >Number Format</text>
<text x="751.0" y="228.0" font-family="Liberation Sans" font-size="15" font-weight="normal" font-style="normal" fill="#555" textLength="214.0" lengthAdjust="spacingAndGlyphs" >Choose the format for your cells,</text>
<text x="751.0" y="248.0" font-family="Liberation Sans" font-size="15" font-weight="normal" font-style="normal" fill="#555" textLength="224.5" lengthAdjust="spacingAndGlyphs" >such as percentage, currency, date</text>
<text x="751.0" y="268.0" font-family="Liberation Sans" font-size="15" font-weight="normal" font-style="normal" fill="#555" textLength="51.0" lengthAdjust="spacingAndGlyphs" >or time.</text>
<line x1="744" y1="278.5" x2="994" y2="278.5" stroke="#e1e1e1" stroke-width="1"/>
<circle cx="760" cy="296" r="9" fill="#3e76b5" shape-rendering="geometricPrecision"/>
<text x="760" y="302" font-family="Liberation Sans" font-size="15" font-weight="bold" fill="#fff" text-anchor="middle">?</text>
<text x="777.5" y="302.0" font-family="Liberation Sans" font-size="15" font-weight="bold" font-style="normal" fill="#2e6db0" textLength="91.5" lengthAdjust="spacingAndGlyphs" >Tell me more</text>
<rect x="1595" y="225" width="25" height="591" fill="#fff" />
<rect x="1598" y="246" width="19" height="552" fill="#f1f1f1" />
<rect x="1598.5" y="227.5" width="18" height="17" fill="#fff" stroke="#c6c6c6" stroke-width="1" />
<path d="M1603 239h9l-4.5-5z" fill="#777"/>
<rect x="1598.5" y="246.5" width="18" height="229" fill="#fff" stroke="#ababab" stroke-width="1" />
<rect x="1598.5" y="798.5" width="18" height="17" fill="#fff" stroke="#c6c6c6" stroke-width="1" />
<path d="M1603 804h9l-4.5 5z" fill="#777"/>
<rect x="1" y="815" width="1619" height="30" fill="#f3f3f3" />
<rect x="35" y="815" width="1560" height="1" fill="#fff" />
<line x1="1" y1="816.5" x2="1620" y2="816.5" stroke="#d6d6d6" stroke-width="1"/>
<path d="M33 825v11l-5-5.5z" fill="#bdbdbd"/>
<path d="M58 825v11l5-5.5z" fill="#1e6b3c"/>
<line x1="104.5" y1="820" x2="104.5" y2="841" stroke="#c6c6c6" stroke-width="1"/>
<text x="117.5" y="832.5" font-family="Liberation Sans" font-size="16" font-weight="normal" font-style="normal" fill="#444" textLength="54.0" lengthAdjust="spacingAndGlyphs" >Mucluc</text>
<defs><linearGradient id="tg" x1="0" y1="0" x2="0" y2="1"><stop offset="0" stop-color="#ffffff"/><stop offset="1" stop-color="#9cf39c"/></linearGradient></defs>
<rect x="185" y="816" width="99" height="26" fill="#fff" />
<line x1="185.5" y1="816" x2="185.5" y2="842" stroke="#c6c6c6" stroke-width="1"/>
<line x1="283.5" y1="816" x2="283.5" y2="842" stroke="#c6c6c6" stroke-width="1"/>
<rect x="188" y="817" width="93" height="22" fill="url(#tg)" />
<rect x="185" y="840" width="99" height="2" fill="#217346" />
<text x="197.5" y="832.5" font-family="Liberation Sans" font-size="16" font-weight="bold" font-style="normal" fill="#217346" textLength="73.0" lengthAdjust="spacingAndGlyphs" >01-TKDD</text>
<rect x="286" y="819" width="72" height="23" fill="#ffff00" />
<text x="296.5" y="832.5" font-family="Liberation Sans" font-size="16" font-weight="normal" font-style="normal" fill="#000" textLength="50.0" lengthAdjust="spacingAndGlyphs" >02-NN</text>
<line x1="360.5" y1="820" x2="360.5" y2="841" stroke="#c6c6c6" stroke-width="1"/>
<rect x="363" y="819" width="97" height="23" fill="#ff00ff" />
<text x="373.0" y="832.5" font-family="Liberation Sans" font-size="16" font-weight="normal" font-style="normal" fill="#fff" textLength="74.5" lengthAdjust="spacingAndGlyphs" >03-PhiNN</text>
<line x1="462.5" y1="820" x2="462.5" y2="841" stroke="#c6c6c6" stroke-width="1"/>
<rect x="465" y="819" width="95" height="23" fill="#fff" />
<text x="476.0" y="832.5" font-family="Liberation Sans" font-size="16" font-weight="normal" font-style="normal" fill="#000" textLength="70.0" lengthAdjust="spacingAndGlyphs" >04-DVHC</text>
<line x1="561.5" y1="820" x2="561.5" y2="841" stroke="#c6c6c6" stroke-width="1"/>
<rect x="564" y="819" width="104" height="23" fill="#008080" />
<text x="575.5" y="832.5" font-family="Liberation Sans" font-size="16" font-weight="normal" font-style="normal" fill="#fff" textLength="80.5" lengthAdjust="spacingAndGlyphs" >5a-DGCTH</text>
<line x1="670.5" y1="820" x2="670.5" y2="841" stroke="#c6c6c6" stroke-width="1"/>
<rect x="673" y="819" width="122" height="23" fill="#008080" />
<text x="684.5" y="832.5" font-family="Liberation Sans" font-size="16" font-weight="normal" font-style="normal" fill="#fff" textLength="98.0" lengthAdjust="spacingAndGlyphs" >5b-DGCThue</text>
<line x1="797.5" y1="820" x2="797.5" y2="841" stroke="#c6c6c6" stroke-width="1"/>
<rect x="800" y="819" width="99" height="23" fill="#ff0000" />
<svg x="800" y="815" width="99" height="30" overflow="hidden">
<text x="11.5" y="17.5" font-family="Liberation Sans" font-size="16" fill="#fff">6a-TDMDSD</text>
</svg>
<rect x="907" y="831" width="2" height="2" fill="#0a5c2a" />
<rect x="912" y="831" width="2" height="2" fill="#0a5c2a" />
<rect x="917" y="831" width="2" height="2" fill="#0a5c2a" />
<circle cx="941.5" cy="830.5" r="9" fill="none" stroke="#777" stroke-width="1.3" shape-rendering="geometricPrecision"/>
<rect x="936" y="830" width="12" height="1.5" fill="#777" />
<rect x="941" y="825" width="1.5" height="12" fill="#777" />
<rect x="970" y="825" width="2" height="2" fill="#bbb" />
<rect x="970" y="830" width="2" height="2" fill="#bbb" />
<rect x="970" y="835" width="2" height="2" fill="#bbb" />
<rect x="1006" y="821" width="570" height="19" fill="#e6e6e6" />
<rect x="988.5" y="821.5" width="17" height="18" fill="#fff" stroke="#c6c6c6" stroke-width="1" />
<path d="M1000 825.5v10l-5-5z" fill="#777"/>
<rect x="1013.5" y="821.5" width="106" height="18" fill="#fff" stroke="#ababab" stroke-width="1" />
<rect x="1576.5" y="821.5" width="18" height="18" fill="#fff" stroke="#c6c6c6" stroke-width="1" />
<path d="M1583 825.5v10l5-5z" fill="#777"/>
<rect x="0" y="845" width="1621" height="28" fill="#217346" />
<text x="8.5" y="863.0" font-family="Liberation Sans" font-size="14" font-weight="normal" font-style="normal" fill="#fff" textLength="39.0" lengthAdjust="spacingAndGlyphs" >READY</text>
<rect x="1269" y="845" width="41" height="27" fill="#0f6333" />
<g fill="none" stroke="#fff" stroke-width="1.2" shape-rendering="crispEdges">
<rect x="1282.5" y="851.5" width="12" height="12"/><path d="M1286.5 851.5v12M1290.5 851.5v12M1282.5 855.5h12M1282.5 859.5h12"/>
<rect x="1323.5" y="851.5" width="13" height="12"/><rect x="1326.5" y="854.5" width="7" height="6"/>
<rect x="1364.5" y="851.5" width="13" height="12"/>
</g>
<rect x="1328" y="856" width="4" height="1" fill="#fff" />
<rect x="1328" y="858" width="4" height="1" fill="#fff" />
<rect x="1365" y="852" width="4" height="7" fill="#e8f0ea" />
<rect x="1370" y="852" width="3" height="7" fill="#e8f0ea" />
<rect x="1397" y="857" width="9" height="2" fill="#fff" />
<rect x="1410" y="858" width="125" height="1" fill="#fff" />
<rect x="1470" y="851" width="5" height="14" fill="#fff" />
<rect x="1539" y="857" width="12" height="2" fill="#fff" />
<rect x="1544" y="852" width="2" height="12" fill="#fff" />
<text x="1566.5" y="863.0" font-family="Liberation Sans" font-size="14" font-weight="normal" font-style="normal" fill="#fff" textLength="31.0" lengthAdjust="spacingAndGlyphs" >100%</text>
<rect x="0" y="0" width="1621" height="1" fill="#217346" />
<rect x="0" y="0" width="1" height="873" fill="#217346" />
<rect x="1620" y="0" width="1" height="873" fill="#217346" />
</svg></body></html>
